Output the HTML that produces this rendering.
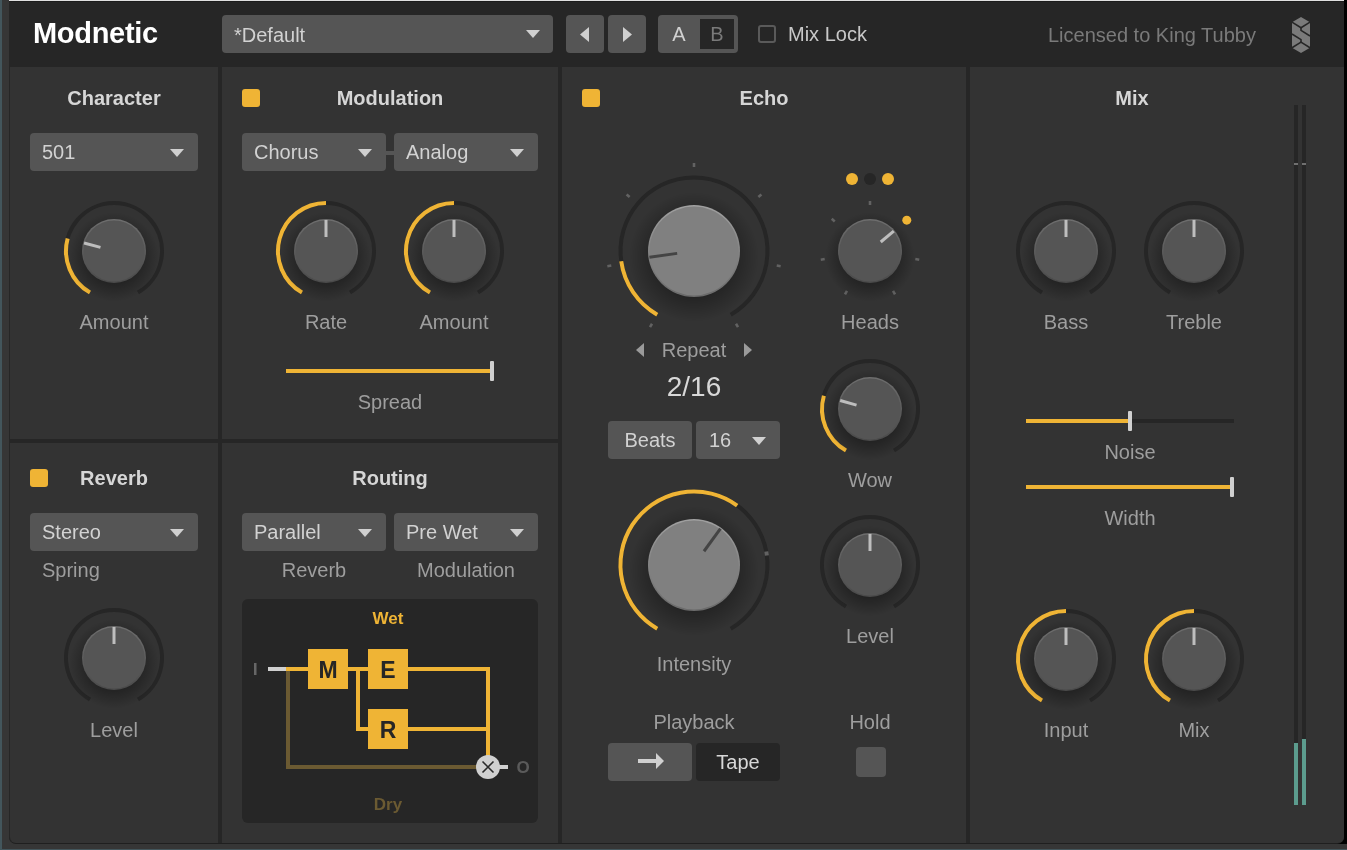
<!DOCTYPE html><html><head><meta charset="utf-8"><style>
html,body{margin:0;padding:0;background:#333;}
#r{position:relative;width:1347px;height:850px;overflow:hidden;font-family:"Liberation Sans",sans-serif;}
#r>div,#r>svg{position:absolute;}
</style></head><body><div id="r">
<div style="left:0px;top:0px;width:1347px;height:850px;background:#363636;border-radius:0px;"></div>
<div style="left:0px;top:0px;width:2px;height:850px;background:#43565c;border-radius:0px;"></div>
<div style="left:0px;top:849px;width:1347px;height:1px;background:#43565c;border-radius:0px;"></div>
<div style="left:1344px;top:0px;width:3px;height:844px;background:#000000;border-radius:0px;"></div>
<div style="left:1330px;top:830px;width:14px;height:14px;background:#000"></div>
<div style="left:9px;top:1px;width:1335px;height:843px;background:#1f1f1f;border-radius:0 0 7px 7px"></div>
<div style="left:9px;top:2px;width:1335px;height:841px;background:#262626;border-radius:0 0 6px 6px"></div>
<div style="left:9px;top:0px;width:1335px;height:1px;background:#e0e0e0;border-radius:0px;"></div>
<div style="left:9px;top:1px;width:1335px;height:1px;background:#1c1c1c;border-radius:0px;"></div>
<div style="left:10px;top:67px;width:208px;height:372px;background:#333333;border-radius:0px;"></div>
<div style="left:10px;top:443px;width:208px;height:400px;background:#333333;border-radius:0 0 0 6px"></div>
<div style="left:222px;top:67px;width:336px;height:372px;background:#333333;border-radius:0px;"></div>
<div style="left:222px;top:443px;width:336px;height:400px;background:#333333;border-radius:0px;"></div>
<div style="left:562px;top:67px;width:404px;height:776px;background:#333333;border-radius:0px;"></div>
<div style="left:970px;top:67px;width:374px;height:776px;background:#333333;border-radius:0 0 6px 0"></div>
<div style="left:33px;top:19px;white-space:nowrap;font-size:29px;line-height:29px;font-weight:bold;color:#ffffff;will-change:transform;letter-spacing:-0.3px">Modnetic</div>
<div style="left:222px;top:15px;width:331px;height:38px;background:#555555;border-radius:4px;"></div>
<div style="left:234px;top:25px;white-space:nowrap;font-size:20px;line-height:20px;font-weight:normal;color:#d2d2d2;will-change:transform;">*Default</div>
<svg style="left:526px;top:30px" width="14" height="8"><polygon points="0,0 14,0 7.0,8" fill="#d0d0d0"/></svg>
<div style="left:566px;top:15px;width:38px;height:38px;background:#555555;border-radius:4px;"></div>
<svg style="left:580px;top:27px" width="9" height="15"><polygon points="9,0 9,15 0,7.5" fill="#d0d0d0"/></svg>
<div style="left:608px;top:15px;width:38px;height:38px;background:#555555;border-radius:4px;"></div>
<svg style="left:623px;top:27px" width="9" height="15"><polygon points="0,0 9,7.5 0,15" fill="#d0d0d0"/></svg>
<div style="left:658px;top:15px;width:80px;height:38px;background:#555555;border-radius:4px;"></div>
<div style="left:700px;top:19px;width:34px;height:30px;background:#262626;border-radius:0px;"></div>
<div style="left:529px;top:24px;width:300px;text-align:center;font-size:20px;line-height:20px;font-weight:normal;color:#d2d2d2;will-change:transform;">A</div>
<div style="left:567px;top:24px;width:300px;text-align:center;font-size:20px;line-height:20px;font-weight:normal;color:#7a7a7a;will-change:transform;">B</div>
<div style="left:758px;top:25px;width:14px;height:14px;border:2px solid #5a5a5a;border-radius:3px"></div>
<div style="left:788px;top:24px;white-space:nowrap;font-size:20px;line-height:20px;font-weight:normal;color:#c8c8c8;will-change:transform;">Mix Lock</div>
<div style="left:1048px;top:25px;white-space:nowrap;font-size:20px;line-height:20px;font-weight:normal;color:#7a7a7a;will-change:transform;">Licensed to King Tubby</div>
<svg style="left:1290px;top:15px" width="22" height="41" viewBox="0 0 22 40" preserveAspectRatio="none">
<polygon points="11,2 20,7 20,32 11,37 2,32 2,7" fill="#7a7a7a"/>
<polyline points="2,7 11,12.5 20,7" stroke="#262626" stroke-width="1.6" fill="none"/>
<polyline points="2,32 11,26.5 20,32" stroke="#262626" stroke-width="1.6" fill="none"/>
<polyline points="11,12.5 11,15 20,20.5" stroke="#262626" stroke-width="1.6" fill="none"/>
<polyline points="11,26.5 11,24 2,18.5" stroke="#262626" stroke-width="1.6" fill="none"/>
</svg>
<div style="left:-36px;top:88px;width:300px;text-align:center;font-size:20px;line-height:20px;font-weight:bold;color:#d6d6d6;will-change:transform;">Character</div>
<div style="left:30px;top:133px;width:168px;height:38px;background:#555555;border-radius:4px;"></div>
<div style="left:42px;top:142px;white-space:nowrap;font-size:20px;line-height:20px;font-weight:normal;color:#d2d2d2;will-change:transform;">501</div>
<svg style="left:170px;top:149px" width="14" height="8"><polygon points="0,0 14,0 7.0,8" fill="#d0d0d0"/></svg>
<svg style="left:54.0px;top:191.0px" width="120" height="120"><defs><radialGradient id="sh1" cx="0.5" cy="0.5" r="0.5"><stop offset="0.6" stop-color="#000" stop-opacity="0.3"/><stop offset="1" stop-color="#000" stop-opacity="0"/></radialGradient><linearGradient id="rim1" x1="0" y1="0" x2="0" y2="1"><stop offset="0" stop-color="#6e6e6e"/><stop offset="1" stop-color="#4a4a4a"/></linearGradient></defs><path d="M36.00,101.57 A48,48 0 1 1 84.00,101.57" stroke="#262626" stroke-width="4" fill="none"/><path d="M36.00,101.57 A48,48 0 0 1 13.64,47.58" stroke="#efb435" stroke-width="4" fill="none"/><circle cx="60.0" cy="66.0" r="44.8" fill="url(#sh1)"/><circle cx="60.0" cy="60.0" r="32" fill="url(#rim1)"/><circle cx="60.0" cy="60.0" r="30.5" fill="#555555"/><line x1="46.48" y1="56.38" x2="30.06" y2="51.98" stroke="#bebebe" stroke-width="3"/></svg>
<div style="left:-36px;top:312px;width:300px;text-align:center;font-size:20px;line-height:20px;font-weight:normal;color:#9e9e9e;will-change:transform;">Amount</div>
<div style="left:242px;top:89px;width:18px;height:18px;background:#efb435;border-radius:3px;"></div>
<div style="left:240px;top:88px;width:300px;text-align:center;font-size:20px;line-height:20px;font-weight:bold;color:#d6d6d6;will-change:transform;">Modulation</div>
<div style="left:242px;top:133px;width:144px;height:38px;background:#555555;border-radius:4px;"></div>
<div style="left:254px;top:142px;white-space:nowrap;font-size:20px;line-height:20px;font-weight:normal;color:#d2d2d2;will-change:transform;">Chorus</div>
<svg style="left:358px;top:149px" width="14" height="8"><polygon points="0,0 14,0 7.0,8" fill="#d0d0d0"/></svg>
<div style="left:386px;top:151px;width:8px;height:4px;background:#555555;border-radius:0px;"></div>
<div style="left:394px;top:133px;width:144px;height:38px;background:#555555;border-radius:4px;"></div>
<div style="left:406px;top:142px;white-space:nowrap;font-size:20px;line-height:20px;font-weight:normal;color:#d2d2d2;will-change:transform;">Analog</div>
<svg style="left:510px;top:149px" width="14" height="8"><polygon points="0,0 14,0 7.0,8" fill="#d0d0d0"/></svg>
<svg style="left:266.0px;top:191.0px" width="120" height="120"><defs><radialGradient id="sh2" cx="0.5" cy="0.5" r="0.5"><stop offset="0.6" stop-color="#000" stop-opacity="0.3"/><stop offset="1" stop-color="#000" stop-opacity="0"/></radialGradient><linearGradient id="rim2" x1="0" y1="0" x2="0" y2="1"><stop offset="0" stop-color="#6e6e6e"/><stop offset="1" stop-color="#4a4a4a"/></linearGradient></defs><path d="M36.00,101.57 A48,48 0 1 1 84.00,101.57" stroke="#262626" stroke-width="4" fill="none"/><path d="M36.00,101.57 A48,48 0 0 1 60.00,12.00" stroke="#efb435" stroke-width="4" fill="none"/><circle cx="60.0" cy="66.0" r="44.8" fill="url(#sh2)"/><circle cx="60.0" cy="60.0" r="32" fill="url(#rim2)"/><circle cx="60.0" cy="60.0" r="30.5" fill="#555555"/><line x1="60.00" y1="46.00" x2="60.00" y2="29.00" stroke="#bebebe" stroke-width="3"/></svg>
<svg style="left:394.0px;top:191.0px" width="120" height="120"><defs><radialGradient id="sh3" cx="0.5" cy="0.5" r="0.5"><stop offset="0.6" stop-color="#000" stop-opacity="0.3"/><stop offset="1" stop-color="#000" stop-opacity="0"/></radialGradient><linearGradient id="rim3" x1="0" y1="0" x2="0" y2="1"><stop offset="0" stop-color="#6e6e6e"/><stop offset="1" stop-color="#4a4a4a"/></linearGradient></defs><path d="M36.00,101.57 A48,48 0 1 1 84.00,101.57" stroke="#262626" stroke-width="4" fill="none"/><path d="M36.00,101.57 A48,48 0 0 1 60.00,12.00" stroke="#efb435" stroke-width="4" fill="none"/><circle cx="60.0" cy="66.0" r="44.8" fill="url(#sh3)"/><circle cx="60.0" cy="60.0" r="32" fill="url(#rim3)"/><circle cx="60.0" cy="60.0" r="30.5" fill="#555555"/><line x1="60.00" y1="46.00" x2="60.00" y2="29.00" stroke="#bebebe" stroke-width="3"/></svg>
<div style="left:176px;top:312px;width:300px;text-align:center;font-size:20px;line-height:20px;font-weight:normal;color:#9e9e9e;will-change:transform;">Rate</div>
<div style="left:304px;top:312px;width:300px;text-align:center;font-size:20px;line-height:20px;font-weight:normal;color:#9e9e9e;will-change:transform;">Amount</div>
<div style="left:286px;top:369px;width:206px;height:4px;background:#efb435;border-radius:0px;"></div>
<div style="left:490px;top:361px;width:4px;height:20px;background:#d0d0d0;border-radius:1px;"></div>
<div style="left:240px;top:392px;width:300px;text-align:center;font-size:20px;line-height:20px;font-weight:normal;color:#9e9e9e;will-change:transform;">Spread</div>
<div style="left:30px;top:469px;width:18px;height:18px;background:#efb435;border-radius:3px;"></div>
<div style="left:-36px;top:468px;width:300px;text-align:center;font-size:20px;line-height:20px;font-weight:bold;color:#d6d6d6;will-change:transform;">Reverb</div>
<div style="left:30px;top:513px;width:168px;height:38px;background:#555555;border-radius:4px;"></div>
<div style="left:42px;top:522px;white-space:nowrap;font-size:20px;line-height:20px;font-weight:normal;color:#d2d2d2;will-change:transform;">Stereo</div>
<svg style="left:170px;top:529px" width="14" height="8"><polygon points="0,0 14,0 7.0,8" fill="#d0d0d0"/></svg>
<div style="left:42px;top:560px;white-space:nowrap;font-size:20px;line-height:20px;font-weight:normal;color:#9e9e9e;will-change:transform;">Spring</div>
<svg style="left:54.0px;top:598.0px" width="120" height="120"><defs><radialGradient id="sh4" cx="0.5" cy="0.5" r="0.5"><stop offset="0.6" stop-color="#000" stop-opacity="0.3"/><stop offset="1" stop-color="#000" stop-opacity="0"/></radialGradient><linearGradient id="rim4" x1="0" y1="0" x2="0" y2="1"><stop offset="0" stop-color="#6e6e6e"/><stop offset="1" stop-color="#4a4a4a"/></linearGradient></defs><path d="M36.00,101.57 A48,48 0 1 1 84.00,101.57" stroke="#262626" stroke-width="4" fill="none"/><circle cx="60.0" cy="66.0" r="44.8" fill="url(#sh4)"/><circle cx="60.0" cy="60.0" r="32" fill="url(#rim4)"/><circle cx="60.0" cy="60.0" r="30.5" fill="#555555"/><line x1="60.00" y1="46.00" x2="60.00" y2="29.00" stroke="#bebebe" stroke-width="3"/></svg>
<div style="left:-36px;top:720px;width:300px;text-align:center;font-size:20px;line-height:20px;font-weight:normal;color:#9e9e9e;will-change:transform;">Level</div>
<div style="left:240px;top:468px;width:300px;text-align:center;font-size:20px;line-height:20px;font-weight:bold;color:#d6d6d6;will-change:transform;">Routing</div>
<div style="left:242px;top:513px;width:144px;height:38px;background:#555555;border-radius:4px;"></div>
<div style="left:254px;top:522px;white-space:nowrap;font-size:20px;line-height:20px;font-weight:normal;color:#d2d2d2;will-change:transform;">Parallel</div>
<svg style="left:358px;top:529px" width="14" height="8"><polygon points="0,0 14,0 7.0,8" fill="#d0d0d0"/></svg>
<div style="left:394px;top:513px;width:144px;height:38px;background:#555555;border-radius:4px;"></div>
<div style="left:406px;top:522px;white-space:nowrap;font-size:20px;line-height:20px;font-weight:normal;color:#d2d2d2;will-change:transform;">Pre Wet</div>
<svg style="left:510px;top:529px" width="14" height="8"><polygon points="0,0 14,0 7.0,8" fill="#d0d0d0"/></svg>
<div style="left:164px;top:560px;width:300px;text-align:center;font-size:20px;line-height:20px;font-weight:normal;color:#9e9e9e;will-change:transform;">Reverb</div>
<div style="left:316px;top:560px;width:300px;text-align:center;font-size:20px;line-height:20px;font-weight:normal;color:#9e9e9e;will-change:transform;">Modulation</div>
<div style="left:242px;top:599px;width:296px;height:224px;background:#262626;border-radius:6px;"></div>
<div style="left:238px;top:610px;width:300px;text-align:center;font-size:17px;line-height:17px;font-weight:bold;color:#efb435;will-change:transform;">Wet</div>
<div style="left:238px;top:796px;width:300px;text-align:center;font-size:17px;line-height:17px;font-weight:bold;color:#6b5a32;will-change:transform;">Dry</div>
<svg style="left:242px;top:599px" width="296" height="224">
<path d="M46,70 V168 H246" stroke="#6b5a32" stroke-width="4" fill="none"/>
<path d="M44,70 H246 V168" stroke="#efb435" stroke-width="4" fill="none"/>
<path d="M116,70 V130 H246" stroke="#efb435" stroke-width="4" fill="none"/>
<rect x="26" y="68" width="18" height="4" fill="#d0d0d0"/>
<rect x="66" y="50" width="40" height="40" fill="#efb435"/>
<rect x="126" y="50" width="40" height="40" fill="#efb435"/>
<rect x="126" y="110" width="40" height="40" fill="#efb435"/>
<rect x="256" y="166" width="10" height="4" fill="#d0d0d0"/>
<circle cx="246" cy="168" r="12" fill="#d0d0d0"/>
<path d="M240.5,162.5 L251.5,173.5 M251.5,162.5 L240.5,173.5" stroke="#2a2a2a" stroke-width="1.6"/>
<rect x="12" y="64" width="2.5" height="12" fill="#666"/>
</svg>
<div style="left:178px;top:659px;width:300px;text-align:center;font-size:23px;line-height:23px;font-weight:bold;color:#262626;will-change:transform;">M</div>
<div style="left:238px;top:659px;width:300px;text-align:center;font-size:23px;line-height:23px;font-weight:bold;color:#262626;will-change:transform;">E</div>
<div style="left:238px;top:719px;width:300px;text-align:center;font-size:23px;line-height:23px;font-weight:bold;color:#262626;will-change:transform;">R</div>
<div style="left:373px;top:759px;width:300px;text-align:center;font-size:17px;line-height:17px;font-weight:bold;color:#5a5a5a;will-change:transform;">O</div>
<div style="left:582px;top:89px;width:18px;height:18px;background:#efb435;border-radius:3px;"></div>
<div style="left:614px;top:88px;width:300px;text-align:center;font-size:20px;line-height:20px;font-weight:bold;color:#d6d6d6;will-change:transform;">Echo</div>
<svg style="left:594.0px;top:151.0px" width="200" height="200"><defs><radialGradient id="sh5" cx="0.5" cy="0.5" r="0.5"><stop offset="0.6" stop-color="#000" stop-opacity="0.3"/><stop offset="1" stop-color="#000" stop-opacity="0"/></radialGradient><linearGradient id="rim5" x1="0" y1="0" x2="0" y2="1"><stop offset="0" stop-color="#a0a0a0"/><stop offset="1" stop-color="#6a6a6a"/></linearGradient></defs><path d="M63.25,163.65 A73.5,73.5 0 1 1 136.75,163.65" stroke="#262626" stroke-width="4" fill="none"/><path d="M63.25,163.65 A73.5,73.5 0 0 1 27.22,110.23" stroke="#efb435" stroke-width="4" fill="none"/><line x1="58.00" y1="172.75" x2="56.00" y2="176.21" stroke="#626262" stroke-width="2.6"/><line x1="17.28" y1="114.59" x2="13.34" y2="115.28" stroke="#626262" stroke-width="2.6"/><line x1="35.65" y1="46.01" x2="32.59" y2="43.43" stroke="#626262" stroke-width="2.6"/><line x1="100.00" y1="16.00" x2="100.00" y2="12.00" stroke="#626262" stroke-width="2.6"/><line x1="164.35" y1="46.01" x2="167.41" y2="43.43" stroke="#626262" stroke-width="2.6"/><line x1="182.72" y1="114.59" x2="186.66" y2="115.28" stroke="#626262" stroke-width="2.6"/><line x1="142.00" y1="172.75" x2="144.00" y2="176.21" stroke="#626262" stroke-width="2.6"/><circle cx="100.0" cy="106.0" r="64.4" fill="url(#sh5)"/><circle cx="100.0" cy="100.0" r="46" fill="url(#rim5)"/><circle cx="100.0" cy="100.0" r="44.5" fill="#808080"/><line x1="83.17" y1="102.37" x2="55.44" y2="106.26" stroke="#444444" stroke-width="3"/></svg>
<svg style="left:636px;top:343px" width="8" height="14"><polygon points="8,0 8,14 0,7.0" fill="#9a9a9a"/></svg>
<div style="left:544px;top:340px;width:300px;text-align:center;font-size:20px;line-height:20px;font-weight:normal;color:#9e9e9e;will-change:transform;">Repeat</div>
<svg style="left:744px;top:343px" width="8" height="14"><polygon points="0,0 8,7.0 0,14" fill="#9a9a9a"/></svg>
<div style="left:544px;top:373px;width:300px;text-align:center;font-size:28px;line-height:28px;font-weight:normal;color:#d8d8d8;will-change:transform;">2/16</div>
<div style="left:608px;top:421px;width:84px;height:38px;background:#555555;border-radius:4px;"></div>
<div style="left:500px;top:430px;width:300px;text-align:center;font-size:20px;line-height:20px;font-weight:normal;color:#d2d2d2;will-change:transform;">Beats</div>
<div style="left:696px;top:421px;width:84px;height:38px;background:#555555;border-radius:4px;"></div>
<div style="left:709px;top:430px;white-space:nowrap;font-size:20px;line-height:20px;font-weight:normal;color:#d2d2d2;will-change:transform;">16</div>
<svg style="left:752px;top:437px" width="14" height="8"><polygon points="0,0 14,0 7.0,8" fill="#d0d0d0"/></svg>
<div style="left:846px;top:173px;width:12px;height:12px;border-radius:6px;background:#efb435"></div>
<div style="left:864px;top:173px;width:12px;height:12px;border-radius:6px;background:#262626"></div>
<div style="left:882px;top:173px;width:12px;height:12px;border-radius:6px;background:#efb435"></div>
<svg style="left:810.0px;top:191.0px" width="120" height="120"><defs><radialGradient id="sh6" cx="0.5" cy="0.5" r="0.5"><stop offset="0.6" stop-color="#000" stop-opacity="0.3"/><stop offset="1" stop-color="#000" stop-opacity="0"/></radialGradient><linearGradient id="rim6" x1="0" y1="0" x2="0" y2="1"><stop offset="0" stop-color="#6e6e6e"/><stop offset="1" stop-color="#4a4a4a"/></linearGradient></defs><line x1="37.00" y1="99.84" x2="35.00" y2="103.30" stroke="#626262" stroke-width="2.6"/><line x1="14.70" y1="67.99" x2="10.76" y2="68.68" stroke="#626262" stroke-width="2.6"/><line x1="24.76" y1="30.43" x2="21.70" y2="27.86" stroke="#626262" stroke-width="2.6"/><line x1="60.00" y1="14.00" x2="60.00" y2="10.00" stroke="#626262" stroke-width="2.6"/><line x1="105.30" y1="67.99" x2="109.24" y2="68.68" stroke="#626262" stroke-width="2.6"/><line x1="83.00" y1="99.84" x2="85.00" y2="103.30" stroke="#626262" stroke-width="2.6"/><circle cx="96.77" cy="29.15" r="4.5" fill="#efb435"/><circle cx="60.0" cy="66.0" r="44.8" fill="url(#sh6)"/><circle cx="60.0" cy="60.0" r="32" fill="url(#rim6)"/><circle cx="60.0" cy="60.0" r="30.5" fill="#555555"/><line x1="70.72" y1="51.00" x2="83.75" y2="40.07" stroke="#bebebe" stroke-width="3"/></svg>
<div style="left:720px;top:312px;width:300px;text-align:center;font-size:20px;line-height:20px;font-weight:normal;color:#9e9e9e;will-change:transform;">Heads</div>
<svg style="left:810.0px;top:349.0px" width="120" height="120"><defs><radialGradient id="sh7" cx="0.5" cy="0.5" r="0.5"><stop offset="0.6" stop-color="#000" stop-opacity="0.3"/><stop offset="1" stop-color="#000" stop-opacity="0"/></radialGradient><linearGradient id="rim7" x1="0" y1="0" x2="0" y2="1"><stop offset="0" stop-color="#6e6e6e"/><stop offset="1" stop-color="#4a4a4a"/></linearGradient></defs><path d="M36.00,101.57 A48,48 0 1 1 84.00,101.57" stroke="#262626" stroke-width="4" fill="none"/><path d="M36.00,101.57 A48,48 0 0 1 13.86,46.77" stroke="#efb435" stroke-width="4" fill="none"/><circle cx="60.0" cy="66.0" r="44.8" fill="url(#sh7)"/><circle cx="60.0" cy="60.0" r="32" fill="url(#rim7)"/><circle cx="60.0" cy="60.0" r="30.5" fill="#555555"/><line x1="46.54" y1="56.14" x2="30.20" y2="51.46" stroke="#bebebe" stroke-width="3"/></svg>
<div style="left:720px;top:470px;width:300px;text-align:center;font-size:20px;line-height:20px;font-weight:normal;color:#9e9e9e;will-change:transform;">Wow</div>
<svg style="left:594.0px;top:465.0px" width="200" height="200"><defs><radialGradient id="sh8" cx="0.5" cy="0.5" r="0.5"><stop offset="0.6" stop-color="#000" stop-opacity="0.3"/><stop offset="1" stop-color="#000" stop-opacity="0"/></radialGradient><linearGradient id="rim8" x1="0" y1="0" x2="0" y2="1"><stop offset="0" stop-color="#a0a0a0"/><stop offset="1" stop-color="#6a6a6a"/></linearGradient></defs><path d="M63.25,163.65 A73.5,73.5 0 1 1 136.75,163.65" stroke="#262626" stroke-width="4" fill="none"/><path d="M63.25,163.65 A73.5,73.5 0 1 1 143.20,40.54" stroke="#efb435" stroke-width="4" fill="none"/><line x1="170.62" y1="88.81" x2="174.57" y2="88.19" stroke="#626262" stroke-width="4"/><circle cx="100.0" cy="106.0" r="64.4" fill="url(#sh8)"/><circle cx="100.0" cy="100.0" r="46" fill="url(#rim8)"/><circle cx="100.0" cy="100.0" r="44.5" fill="#808080"/><line x1="109.99" y1="86.25" x2="126.45" y2="63.59" stroke="#444444" stroke-width="3"/></svg>
<div style="left:544px;top:654px;width:300px;text-align:center;font-size:20px;line-height:20px;font-weight:normal;color:#9e9e9e;will-change:transform;">Intensity</div>
<svg style="left:810.0px;top:505.0px" width="120" height="120"><defs><radialGradient id="sh9" cx="0.5" cy="0.5" r="0.5"><stop offset="0.6" stop-color="#000" stop-opacity="0.3"/><stop offset="1" stop-color="#000" stop-opacity="0"/></radialGradient><linearGradient id="rim9" x1="0" y1="0" x2="0" y2="1"><stop offset="0" stop-color="#6e6e6e"/><stop offset="1" stop-color="#4a4a4a"/></linearGradient></defs><path d="M36.00,101.57 A48,48 0 1 1 84.00,101.57" stroke="#262626" stroke-width="4" fill="none"/><circle cx="60.0" cy="66.0" r="44.8" fill="url(#sh9)"/><circle cx="60.0" cy="60.0" r="32" fill="url(#rim9)"/><circle cx="60.0" cy="60.0" r="30.5" fill="#555555"/><line x1="60.00" y1="46.00" x2="60.00" y2="29.00" stroke="#bebebe" stroke-width="3"/></svg>
<div style="left:720px;top:626px;width:300px;text-align:center;font-size:20px;line-height:20px;font-weight:normal;color:#9e9e9e;will-change:transform;">Level</div>
<div style="left:544px;top:712px;width:300px;text-align:center;font-size:20px;line-height:20px;font-weight:normal;color:#9e9e9e;will-change:transform;">Playback</div>
<div style="left:720px;top:712px;width:300px;text-align:center;font-size:20px;line-height:20px;font-weight:normal;color:#9e9e9e;will-change:transform;">Hold</div>
<div style="left:608px;top:743px;width:84px;height:38px;background:#555555;border-radius:4px;"></div>
<svg style="left:636px;top:752px" width="30" height="20"><rect x="2" y="7" width="19" height="4" fill="#d0d0d0"/><polygon points="20,1 28,9 20,17" fill="#d0d0d0"/></svg>
<div style="left:696px;top:743px;width:84px;height:38px;background:#262626;border-radius:4px;"></div>
<div style="left:588px;top:752px;width:300px;text-align:center;font-size:20px;line-height:20px;font-weight:normal;color:#d8d8d8;will-change:transform;">Tape</div>
<div style="left:856px;top:747px;width:30px;height:30px;background:#555555;border-radius:4px;"></div>
<div style="left:982px;top:88px;width:300px;text-align:center;font-size:20px;line-height:20px;font-weight:bold;color:#d6d6d6;will-change:transform;">Mix</div>
<svg style="left:1006.0px;top:191.0px" width="120" height="120"><defs><radialGradient id="sh10" cx="0.5" cy="0.5" r="0.5"><stop offset="0.6" stop-color="#000" stop-opacity="0.3"/><stop offset="1" stop-color="#000" stop-opacity="0"/></radialGradient><linearGradient id="rim10" x1="0" y1="0" x2="0" y2="1"><stop offset="0" stop-color="#6e6e6e"/><stop offset="1" stop-color="#4a4a4a"/></linearGradient></defs><path d="M36.00,101.57 A48,48 0 1 1 84.00,101.57" stroke="#262626" stroke-width="4" fill="none"/><circle cx="60.0" cy="66.0" r="44.8" fill="url(#sh10)"/><circle cx="60.0" cy="60.0" r="32" fill="url(#rim10)"/><circle cx="60.0" cy="60.0" r="30.5" fill="#555555"/><line x1="60.00" y1="46.00" x2="60.00" y2="29.00" stroke="#bebebe" stroke-width="3"/></svg>
<svg style="left:1134.0px;top:191.0px" width="120" height="120"><defs><radialGradient id="sh11" cx="0.5" cy="0.5" r="0.5"><stop offset="0.6" stop-color="#000" stop-opacity="0.3"/><stop offset="1" stop-color="#000" stop-opacity="0"/></radialGradient><linearGradient id="rim11" x1="0" y1="0" x2="0" y2="1"><stop offset="0" stop-color="#6e6e6e"/><stop offset="1" stop-color="#4a4a4a"/></linearGradient></defs><path d="M36.00,101.57 A48,48 0 1 1 84.00,101.57" stroke="#262626" stroke-width="4" fill="none"/><circle cx="60.0" cy="66.0" r="44.8" fill="url(#sh11)"/><circle cx="60.0" cy="60.0" r="32" fill="url(#rim11)"/><circle cx="60.0" cy="60.0" r="30.5" fill="#555555"/><line x1="60.00" y1="46.00" x2="60.00" y2="29.00" stroke="#bebebe" stroke-width="3"/></svg>
<div style="left:916px;top:312px;width:300px;text-align:center;font-size:20px;line-height:20px;font-weight:normal;color:#9e9e9e;will-change:transform;">Bass</div>
<div style="left:1044px;top:312px;width:300px;text-align:center;font-size:20px;line-height:20px;font-weight:normal;color:#9e9e9e;will-change:transform;">Treble</div>
<div style="left:1026px;top:419px;width:208px;height:4px;background:#262626;border-radius:0px;"></div>
<div style="left:1026px;top:419px;width:104px;height:4px;background:#efb435;border-radius:0px;"></div>
<div style="left:1128px;top:411px;width:4px;height:20px;background:#d0d0d0;border-radius:1px;"></div>
<div style="left:980px;top:442px;width:300px;text-align:center;font-size:20px;line-height:20px;font-weight:normal;color:#9e9e9e;will-change:transform;">Noise</div>
<div style="left:1026px;top:485px;width:206px;height:4px;background:#efb435;border-radius:0px;"></div>
<div style="left:1230px;top:477px;width:4px;height:20px;background:#d0d0d0;border-radius:1px;"></div>
<div style="left:980px;top:508px;width:300px;text-align:center;font-size:20px;line-height:20px;font-weight:normal;color:#9e9e9e;will-change:transform;">Width</div>
<svg style="left:1006.0px;top:599.0px" width="120" height="120"><defs><radialGradient id="sh12" cx="0.5" cy="0.5" r="0.5"><stop offset="0.6" stop-color="#000" stop-opacity="0.3"/><stop offset="1" stop-color="#000" stop-opacity="0"/></radialGradient><linearGradient id="rim12" x1="0" y1="0" x2="0" y2="1"><stop offset="0" stop-color="#6e6e6e"/><stop offset="1" stop-color="#4a4a4a"/></linearGradient></defs><path d="M36.00,101.57 A48,48 0 1 1 84.00,101.57" stroke="#262626" stroke-width="4" fill="none"/><path d="M36.00,101.57 A48,48 0 0 1 60.00,12.00" stroke="#efb435" stroke-width="4" fill="none"/><circle cx="60.0" cy="66.0" r="44.8" fill="url(#sh12)"/><circle cx="60.0" cy="60.0" r="32" fill="url(#rim12)"/><circle cx="60.0" cy="60.0" r="30.5" fill="#555555"/><line x1="60.00" y1="46.00" x2="60.00" y2="29.00" stroke="#bebebe" stroke-width="3"/></svg>
<svg style="left:1134.0px;top:599.0px" width="120" height="120"><defs><radialGradient id="sh13" cx="0.5" cy="0.5" r="0.5"><stop offset="0.6" stop-color="#000" stop-opacity="0.3"/><stop offset="1" stop-color="#000" stop-opacity="0"/></radialGradient><linearGradient id="rim13" x1="0" y1="0" x2="0" y2="1"><stop offset="0" stop-color="#6e6e6e"/><stop offset="1" stop-color="#4a4a4a"/></linearGradient></defs><path d="M36.00,101.57 A48,48 0 1 1 84.00,101.57" stroke="#262626" stroke-width="4" fill="none"/><path d="M36.00,101.57 A48,48 0 0 1 60.00,12.00" stroke="#efb435" stroke-width="4" fill="none"/><circle cx="60.0" cy="66.0" r="44.8" fill="url(#sh13)"/><circle cx="60.0" cy="60.0" r="32" fill="url(#rim13)"/><circle cx="60.0" cy="60.0" r="30.5" fill="#555555"/><line x1="60.00" y1="46.00" x2="60.00" y2="29.00" stroke="#bebebe" stroke-width="3"/></svg>
<div style="left:916px;top:720px;width:300px;text-align:center;font-size:20px;line-height:20px;font-weight:normal;color:#9e9e9e;will-change:transform;">Input</div>
<div style="left:1044px;top:720px;width:300px;text-align:center;font-size:20px;line-height:20px;font-weight:normal;color:#9e9e9e;will-change:transform;">Mix</div>
<div style="left:1294px;top:105px;width:4px;height:700px;background:#262626;border-radius:0px;"></div>
<div style="left:1302px;top:105px;width:4px;height:700px;background:#262626;border-radius:0px;"></div>
<div style="left:1294px;top:743px;width:4px;height:62px;background:#5c9c8e;border-radius:0px;"></div>
<div style="left:1302px;top:739px;width:4px;height:66px;background:#5c9c8e;border-radius:0px;"></div>
<div style="left:1294px;top:163px;width:4px;height:2px;background:#707070;border-radius:0px;"></div>
<div style="left:1302px;top:163px;width:4px;height:2px;background:#707070;border-radius:0px;"></div>
</div></body></html>
